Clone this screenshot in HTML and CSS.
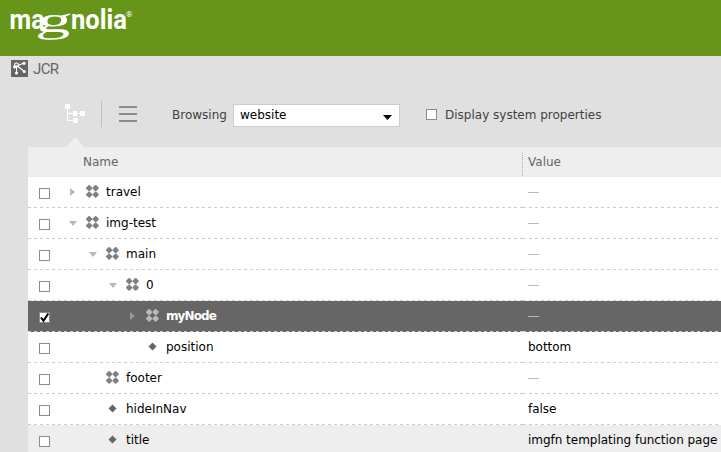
FILE: index.html
```html
<!DOCTYPE html>
<html lang="en">
<head>
<meta charset="utf-8">
<title>JCR</title>
<link rel="stylesheet" href="styles.css">
</head>
<body>
<svg class="defs" width="0" height="0" aria-hidden="true">
  <symbol id="node" viewBox="0 0 13 13">
    <g fill="currentColor">
      <path id="d" d="M2.800 0H3.600L6.300 2.800V3.600L3.600 6.300H2.800L0 3.600V2.800Z"/>
      <use href="#d" x="6.500"/><use href="#d" y="6.500"/><use href="#d" x="6.500" y="6.500"/>
    </g>
  </symbol>
  <symbol id="prop" viewBox="0 0 13 13"><path fill="currentColor" d="M6.500 2.500 10.500 6.500 6.500 10.500 2.500 6.500Z"/></symbol>
</svg>
<header class="brand">
  <svg width="140" height="56" viewBox="0 0 140 56">
    <g fill="#fff">
      <text class="sans" x="9.500" y="29" textLength="35" lengthAdjust="spacingAndGlyphs">ma</text>
      <text class="serif" transform="translate(35.500 31.700) skewX(-9) scale(1.950 1)" x="0" y="0">g</text>
      <text class="sans" x="71" y="29" textLength="56" lengthAdjust="spacingAndGlyphs">nolia</text>
      <text class="reg" x="126" y="17">®</text>
    </g>
  </svg>
</header>
<div class="app">
  <svg width="17" height="17" viewBox="0 0 17 17">
    <path fill="#666" d="M0 0h17v17H0z"/>
    <g stroke="#fff" fill="none" stroke-width="1.1"><path d="M5.500 5.500v8M5.500 5.500l8 6M7 5.500l6-2.500M5.500 5.500L3 8"/><circle cx="5.500" cy="5" r="2"/></g>
    <g fill="#fff"><circle cx="13" cy="3.300" r="1.600"/><circle cx="13.200" cy="11.500" r="1.600"/><circle cx="5.500" cy="13" r="1.500"/><circle cx="3.500" cy="7" r="1.400"/></g>
  </svg>
  <span>JCR</span>
</div>
<div class="tools">
  <svg class="tree" width="20" height="20" viewBox="0 0 20 20"><path fill="#fff" d="M0 0h5v5H3v4h5V7h4v2h3V7h5v5h-5v-2h-3v2H8v-2H3v6h5v-2h5v5H8v-2H2V5H0z"/></svg>
  <i class="rule"></i>
  <svg class="list" width="18" height="16" viewBox="0 0 18 16"><path fill="#8c8c8c" d="M0 0h18v2H0zM0 7h18v2H0zM0 14h18v2H0z"/></svg>
  <span class="label">Browsing</span>
  <div class="select"><span>website</span><svg width="9" height="5" viewBox="0 0 9 5"><path d="M0 0h9L4.500 5z"/></svg></div>
  <i class="box"></i>
  <span class="system">Display system properties</span>
  <i class="pointer"></i>
</div>
<main class="table">
  <div class="head"><div class="hname">Name</div><div class="hvalue">Value</div></div>
  <div class="row l0"><div class="name"><i class="box"></i><i class="arrow shut"></i><svg><use href="#node"/></svg><span>travel</span></div><div class="value"><i class="none"></i></div></div>
  <div class="row l0"><div class="name"><i class="box"></i><i class="arrow open"></i><svg><use href="#node"/></svg><span>img-test</span></div><div class="value"><i class="none"></i></div></div>
  <div class="row l1"><div class="name"><i class="box"></i><i class="arrow open"></i><svg><use href="#node"/></svg><span>main</span></div><div class="value"><i class="none"></i></div></div>
  <div class="row l2"><div class="name"><i class="box"></i><i class="arrow open"></i><svg><use href="#node"/></svg><span>0</span></div><div class="value"><i class="none"></i></div></div>
  <div class="row l3 selected"><div class="name"><i class="box"><svg class="check" viewBox="0 0 11 11"><path d="M2 5.500 4.500 8.800 9.300 1.500"/></svg></i><i class="arrow shut"></i><svg><use href="#node"/></svg><span>myNode</span></div><div class="value"><i class="none"></i></div></div>
  <div class="row l3"><div class="name"><i class="box"></i><i class="arrow"></i><svg class="prop"><use href="#prop"/></svg><span>position</span></div><div class="value">bottom</div></div>
  <div class="row l1"><div class="name"><i class="box"></i><i class="arrow"></i><svg><use href="#node"/></svg><span>footer</span></div><div class="value"><i class="none"></i></div></div>
  <div class="row l1"><div class="name"><i class="box"></i><i class="arrow"></i><svg class="prop"><use href="#prop"/></svg><span>hideInNav</span></div><div class="value">false</div></div>
  <div class="row l1 shade"><div class="name"><i class="box"></i><i class="arrow"></i><svg class="prop"><use href="#prop"/></svg><span>title</span></div><div class="value">imgfn templating function page</div></div>
</main>
</body>
</html>
```
FILE: styles.css
```css
* { box-sizing: border-box; }
html, body { height: 100%; }
body {
  margin: 0;
  overflow: hidden;
  background: #e0e0e0;
  font: 12px/30px Verdana, "DejaVu Sans", sans-serif;
  color: #000;
}
svg { display: block; flex: none; }
.defs { position: absolute; }
.brand { height: 56px; background: #67951a; }
.sans { font: 700 27.5px Roboto, sans-serif; }
.serif { font: 36px "Liberation Serif", serif; }
.reg { font: 8px Roboto, sans-serif; }
.app { display: flex; height: 32px; padding: 4px 0 0 11px; gap: 5px; }
.app span { font: 15px/18px Roboto, sans-serif; color: #666; letter-spacing: -0.6px; }
.tools { position: relative; display: flex; height: 59px; align-items: flex-start; color: #404040; white-space: nowrap; }
.tree { margin: 16px 0 0 65px; }
.rule { width: 1px; height: 26px; margin: 13px 0 0 16px; background: #bebebe; }
.list { margin: 18px 0 0 17px; }
.label { width: 61px; margin: 12px 0 0 35px; }
.select { display: flex; width: 167px; height: 23px; margin-top: 16px; padding: 0 7px 0 6px; border: 1px solid #ccc; background: #fff; color: #000; align-items: center; justify-content: space-between; line-height: 20px; }
.select span { margin-top: -2px; }
.select svg { margin-top: 3px; }
.box { width: 11px; height: 11px; flex: none; border: 1px solid #8c8c8c; background: #fff; }
.tools .box { margin: 21px 0 0 26px; }
.system { margin: 12px 0 0 8px; }
.pointer { position: absolute; left: 66px; bottom: 0; border: solid transparent; border-width: 0 9px 10px; border-bottom-color: #eee; }
.table { margin-left: 28px; }
.head, .row { display: grid; grid-template-columns: 495px 1fr; }
.head { height: 30px; background: #eee; color: #666; }
.hname { padding-left: 55px; background: repeating-linear-gradient(#aaa 0 1px, transparent 1px 2px) 494px 6px / 1px 23px no-repeat; }
.hvalue, .value { padding-left: 5px; }
.value { letter-spacing: -0.03px; }
.row { height: 31px; background: #fff; white-space: nowrap; }
.name, .value { background: repeating-linear-gradient(90deg, #ccc 0 3px, transparent 3px 6px) 0 30px / 100% 1px no-repeat; }
.name { display: flex; padding-left: 11px; }
.row .box { margin-top: 11px; }
.arrow { width: 8px; margin: 0 9px 0 19px; flex: none; }
.shut::before, .open::before { content: ""; display: block; width: 0; border: solid transparent; }
.shut::before { margin: 11px 0 0 1px; border-width: 4px 0 4px 5px; border-left-color: #b8b8b8; }
.open::before { margin-top: 13px; border-width: 5px 4px 0; border-top-color: #b8b8b8; }
.name > svg { width: 13px; height: 13px; margin: 8px 7px 0 0; color: #808080; }
.name > .prop { color: #666; }
.l1 .arrow { margin-left: 39px; }
.l2 .arrow { margin-left: 59px; }
.l3 .arrow { margin-left: 79px; }
.none { display: block; width: 11px; height: 1px; margin-top: 15px; background: #b8b8b8; }
.selected { background: #666; color: #fff; font-weight: 700; letter-spacing: -0.9px; }
.selected .name > svg { color: #b8b8b8; }
.selected .arrow::before { border-left-color: #999; }
.check { width: 11px; height: 11px; margin: -1px; fill: none; stroke: #000; stroke-width: 2; }
.shade { background: #eee; }
```
